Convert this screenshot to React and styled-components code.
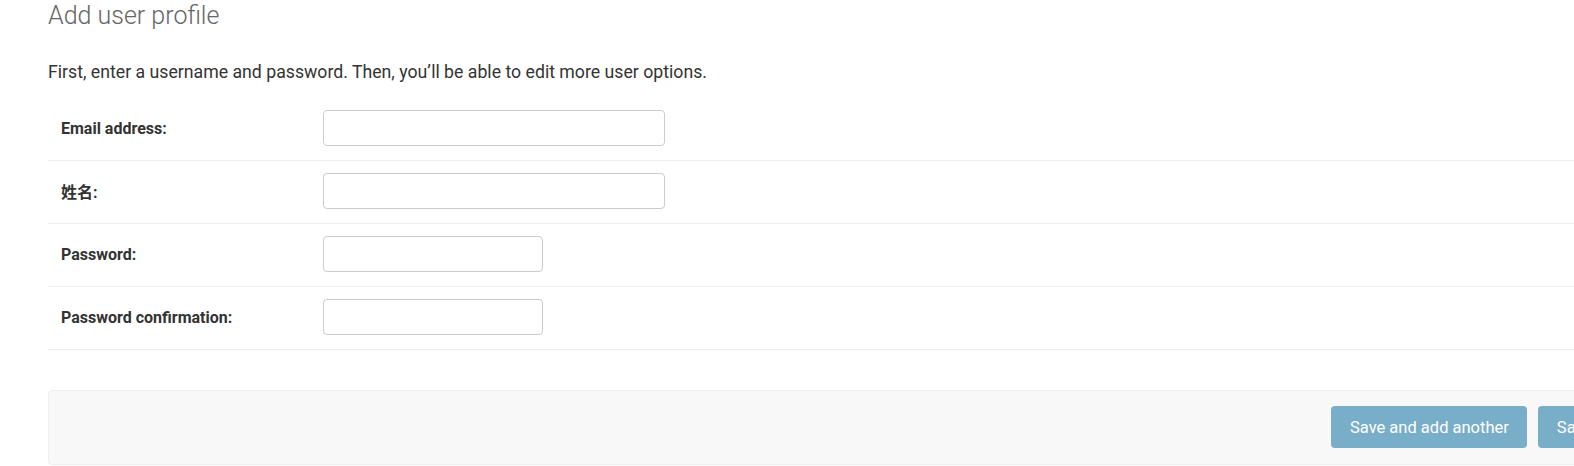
import React from "react";
import styled, { createGlobalStyle } from "styled-components";

const Global = createGlobalStyle`
  html, body { margin: 0; padding: 0; background: #fff; overflow: hidden; }
  body {
    font-family: Roboto, "Noto Sans CJK SC", "Liberation Sans", sans-serif;
    color: #333;
  }
`;

const Page = styled.div`
  width: 1814px;
  padding: 0 0 0 48px;
`;

const Title = styled.h1`
  margin: 0;
  padding-top: 1px;
  font-size: 25px;
  font-weight: 300;
  color: #666;
  line-height: 30px;
`;

const Intro = styled.p`
  margin: 30px 0 0;
  font-size: 17.7px;
  line-height: 22px;
  color: #333;
`;

const Fieldset = styled.div`
  margin-top: 15px;
`;

const Row = styled.div`
  display: flex;
  align-items: center;
  padding: 12px 0 14px 13px;
  border-bottom: 1px solid #eee;
`;

const Label = styled.label`
  width: 262px;
  flex: none;
  font-size: 16px;
  font-weight: 700;
  color: #333;
`;

const Input = styled.input`
  box-sizing: border-box;
  width: ${(p) => (p.$short ? "220px" : "342px")};
  height: 36px;
  border: 1px solid #ccc;
  border-radius: 4px;
  padding: 5px 6px;
  font-family: inherit;
  font-size: 14px;
  background: #fff;
  outline: none;
`;

const SubmitRow = styled.div`
  margin-top: 40px;
  display: flex;
  justify-content: flex-end;
  gap: 11px;
  padding: 15px 14px 16px;
  background: #f8f8f8;
  border: 1px solid #eee;
  border-radius: 4px;
`;

const Button = styled.button`
  height: 42px;
  padding: 0 18.5px;
  border: none;
  border-radius: 4px;
  background: #79aec8;
  color: #fff;
  font-family: inherit;
  font-size: 16.5px;
  cursor: pointer;
`;

const fields = [
  { label: "Email address:", type: "email" },
  { label: "姓名:", type: "text" },
  { label: "Password:", type: "password", short: true },
  { label: "Password confirmation:", type: "password", short: true },
];

export default function App() {
  return (
    <>
      <Global />
      <Page>
        <Title>Add user profile</Title>
        <Intro>
          First, enter a username and password. Then, you’ll be able to edit more user options.
        </Intro>
        <Fieldset>
          {fields.map((f) => (
            <Row key={f.label}>
              <Label>{f.label}</Label>
              <Input type={f.type} $short={f.short} />
            </Row>
          ))}
        </Fieldset>
        <SubmitRow>
          <Button>Save and add another</Button>
          <Button>Save and continue editing</Button>
          <Button>Save</Button>
        </SubmitRow>
      </Page>
    </>
  );
}
